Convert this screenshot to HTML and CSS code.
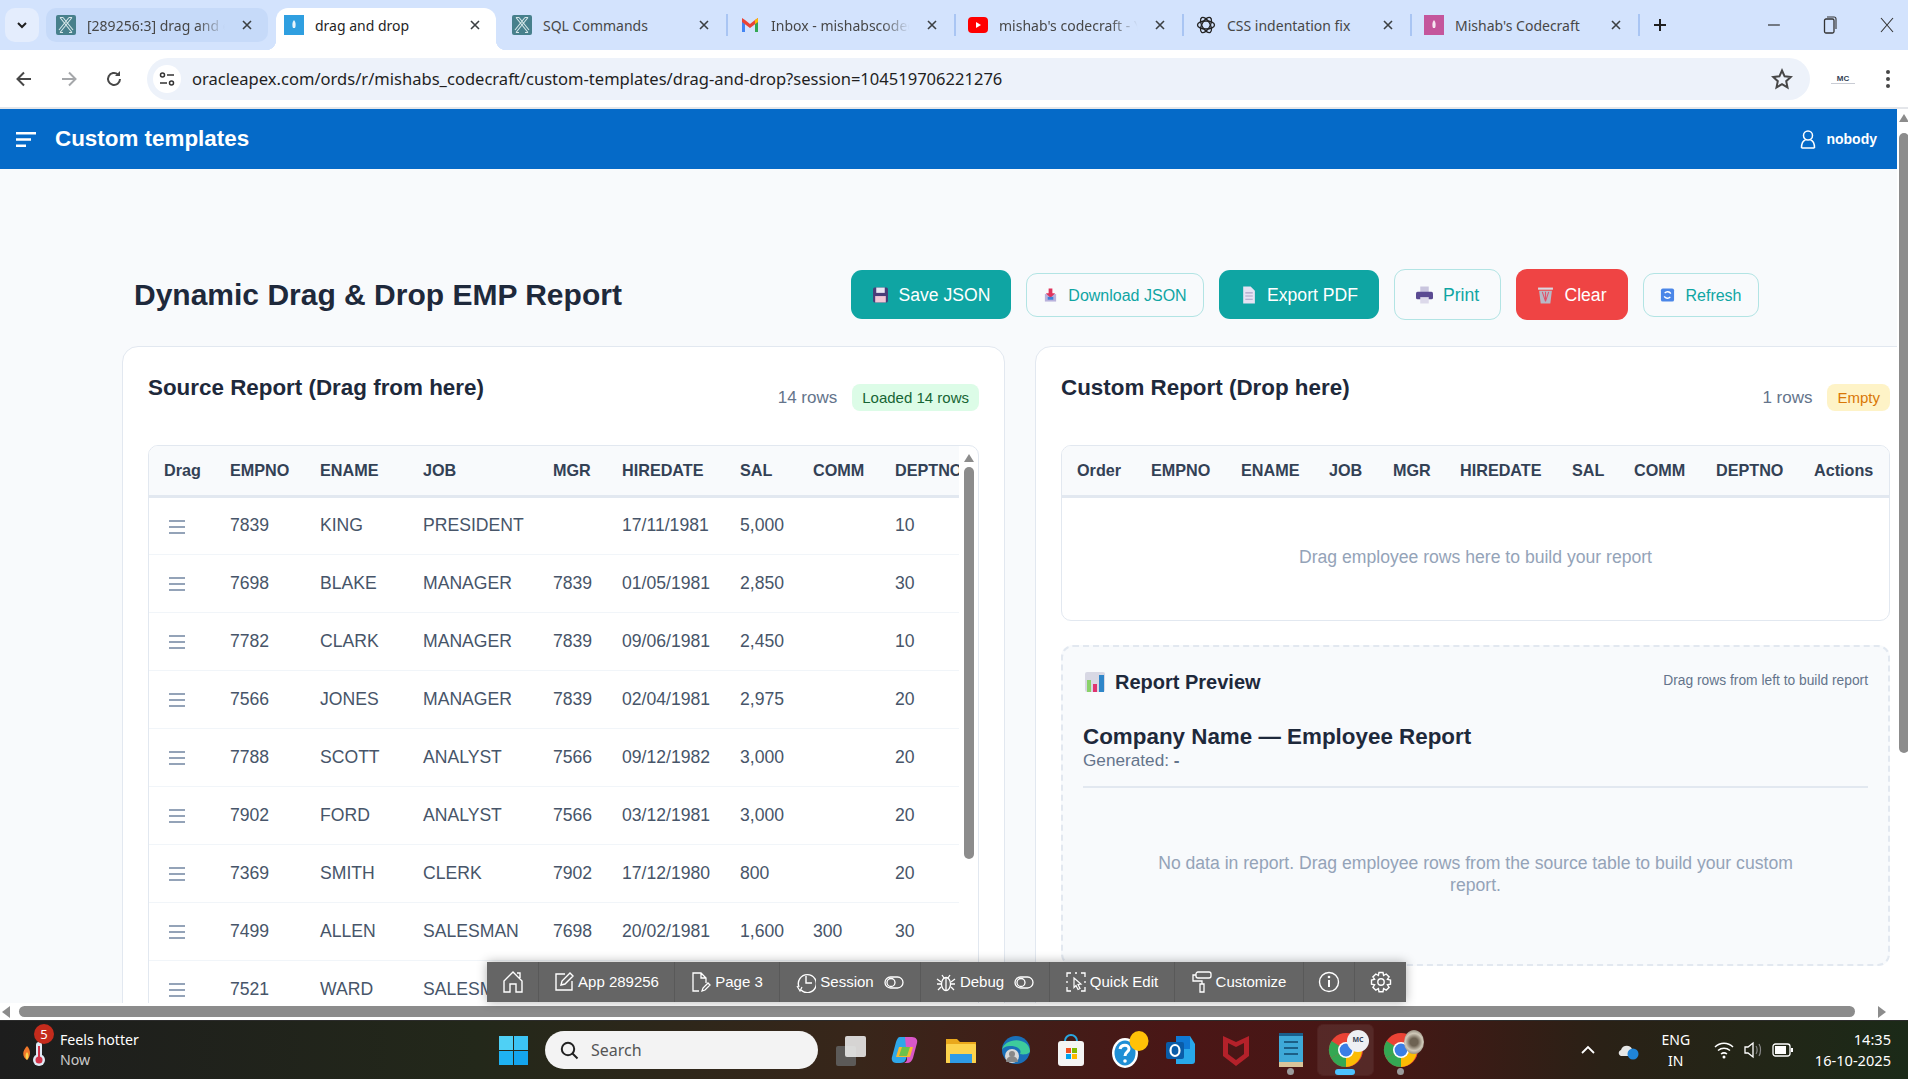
FILE: index.html
```html
<!DOCTYPE html>
<html lang="en">
<head>
    <meta charset="UTF-8">
    <title>drag and drop</title>
    <link rel="stylesheet" href="styles.css">
</head>
<body>
    <svg class="defs" width="0" height="0">
        <symbol id="apex-x" viewBox="0 0 20 20">
            <rect width="20" height="20" rx="2" fill="#47808c"/>
            <g fill="none" stroke="#d5e6e8" stroke-width="1.100"><path d="M4 2.500L16 17.500M7 2.500L17 15M16 2.500L4 17.500M13 2.500L3 15"/><path d="M4 2.500h3M13 2.500h3M4 17.500h3M13 17.500h3"/></g>
        </symbol>
        <symbol id="close-x" viewBox="0 0 12 12">
            <path d="M2 2l8 8M10 2l-8 8" stroke="#3c4043" stroke-width="1.600" fill="none"/>
        </symbol>
        <symbol id="toggle" viewBox="0 0 20 13">
            <rect x="1" y="1" width="18" height="11" rx="5.500" fill="none" stroke="#fff" stroke-width="1.300"/>
            <circle cx="7" cy="6.500" r="4" fill="none" stroke="#fff" stroke-width="1.300"/>
        </symbol>
        <symbol id="chrome" viewBox="0 0 36 36">
            <circle cx="18" cy="18" r="17" fill="#ea4335"/>
            <path d="M18 18L3 26a17 17 0 0 1 .5-17z" fill="#34a853"/>
            <path d="M18 18L3 26a17 17 0 0 0 15 9z" fill="#34a853"/>
            <path d="M18 18h16a17 17 0 0 1-16 17z" fill="#fbbc04"/>
            <circle cx="18" cy="18" r="8" fill="#fff"/>
            <circle cx="18" cy="18" r="6.400" fill="#3b7ee6"/>
        </symbol>
    </svg>

    <div class="tabstrip">
        <div class="tab-search">
            <svg width="12" height="12" viewBox="0 0 12 12"><path d="M2 4l4 4 4-4" fill="none" stroke="#1f1f1f" stroke-width="2"/></svg>
        </div>
        <div class="tab tab-hover">
            <svg class="favicon"><use href="#apex-x"/></svg>
            <span class="tab-title tab-fade">[289256:3] drag and drop</span>
            <svg class="tab-close"><use href="#close-x"/></svg>
        </div>
        <div class="tab tab-active">
            <svg class="favicon" viewBox="0 0 20 20"><rect width="20" height="20" fill="#2f9fe0"/><path d="M10 5c2 2 2 6 1 8H9c-1-2-1-6 1-8z" fill="#e8f4fb"/></svg>
            <span class="tab-title">drag and drop</span>
            <svg class="tab-close"><use href="#close-x"/></svg>
        </div>
        <div class="tab">
            <svg class="favicon"><use href="#apex-x"/></svg>
            <span class="tab-title">SQL Commands</span>
            <svg class="tab-close"><use href="#close-x"/></svg>
            <i class="tab-sep"></i>
        </div>
        <div class="tab">
            <svg class="favicon" viewBox="0 0 20 20"><path d="M2 5v12h3V9z" fill="#4285f4"/><path d="M15 9v8h3V5z" fill="#34a853"/><path d="M2 3v4l8 6 8-6V3l-3 2-5 4-5-4z" fill="#ea4335"/><path d="M15 5l3-2v4l-3 2z" fill="#fbbc04"/></svg>
            <span class="tab-title tab-fade">Inbox - mishabscodecraft</span>
            <svg class="tab-close"><use href="#close-x"/></svg>
            <i class="tab-sep"></i>
        </div>
        <div class="tab">
            <svg class="favicon" viewBox="0 0 20 20"><rect y="2" width="20" height="16" rx="4" fill="#f00"/><path d="M8 7l5 3-5 3z" fill="#fff"/></svg>
            <span class="tab-title tab-fade">mishab's codecraft - YouTube</span>
            <svg class="tab-close"><use href="#close-x"/></svg>
            <i class="tab-sep"></i>
        </div>
        <div class="tab">
            <svg class="favicon" viewBox="0 0 20 20"><g fill="none" stroke="#222" stroke-width="1.300"><ellipse cx="10" cy="10" rx="8.500" ry="4"/><ellipse cx="10" cy="10" rx="8.500" ry="4" transform="rotate(60 10 10)"/><ellipse cx="10" cy="10" rx="8.500" ry="4" transform="rotate(120 10 10)"/></g></svg>
            <span class="tab-title">CSS indentation fix</span>
            <svg class="tab-close"><use href="#close-x"/></svg>
            <i class="tab-sep"></i>
        </div>
        <div class="tab">
            <svg class="favicon" viewBox="0 0 20 20"><rect width="20" height="20" fill="#c4569c"/><path d="M10 5c2 2 2 6 1 8H9c-1-2-1-6 1-8z" fill="#f6e6f1"/></svg>
            <span class="tab-title">Mishab's Codecraft</span>
            <svg class="tab-close"><use href="#close-x"/></svg>
            <i class="tab-sep"></i>
        </div>
        <svg class="new-tab" width="16" height="16" viewBox="0 0 16 16"><path d="M8 2v12M2 8h12" stroke="#1f1f1f" stroke-width="2"/></svg>
        <div class="win-controls">
            <svg width="14" height="14" viewBox="0 0 14 14"><path d="M1 7h12" stroke="#333" stroke-width="1.200"/></svg>
            <svg width="14" height="22" viewBox="0 0 14 22"><rect x="1.500" y="5" width="9.500" height="14" rx="1.500" fill="none" stroke="#333" stroke-width="1.300"/><path d="M4 3h7a2 2 0 0 1 2 2v10" fill="none" stroke="#333" stroke-width="1.100"/></svg>
            <svg width="16" height="16" viewBox="0 0 16 16"><path d="M2 1l12 14M14 1L2 15" stroke="#333" stroke-width="1.100"/></svg>
        </div>
    </div>

    <div class="toolbar">
        <svg class="nav-ico" viewBox="0 0 20 20"><path d="M17 10H4M10 3.500L3.500 10l6.500 6.500" fill="none" stroke="#474747" stroke-width="2"/></svg>
        <svg class="nav-ico" viewBox="0 0 20 20"><path d="M3 10h13M10 3.500l6.500 6.500-6.500 6.500" fill="none" stroke="#a5a7aa" stroke-width="2"/></svg>
        <svg class="nav-ico" viewBox="0 0 20 20"><path d="M16 10a6 6 0 1 1-2-4.500" fill="none" stroke="#474747" stroke-width="2"/><path d="M16 2v5h-5z" fill="#474747"/></svg>
        <div class="omnibox">
            <div class="site-icon">
                <svg width="16" height="16" viewBox="0 0 16 16"><g fill="none" stroke="#333" stroke-width="1.500"><circle cx="3.500" cy="4" r="2"/><path d="M8 4h7M1 12h7"/><circle cx="12.500" cy="12" r="2"/></g></svg>
            </div>
            <span class="url">oracleapex.com/ords/r/mishabs_codecraft/custom-templates/drag-and-drop?session=104519706221276</span>
            <svg class="star" width="22" height="22" viewBox="0 0 22 22"><path d="M11 2.500l2.600 5.800 6.200.7-4.600 4.200 1.300 6.200L11 16.200l-5.500 3.200 1.300-6.200L2.200 9l6.200-.7z" fill="none" stroke="#474747" stroke-width="2"/></svg>
        </div>
        <div class="profile">MC</div>
        <svg class="menu-dots" width="6" height="20" viewBox="0 0 6 20"><circle cx="3" cy="3" r="2" fill="#474747"/><circle cx="3" cy="10" r="2" fill="#474747"/><circle cx="3" cy="17" r="2" fill="#474747"/></svg>
    </div>

    <div class="app">
        <div class="app-main">
            <div class="page">
                <header class="app-header">
                    <div class="brand">
                        <svg width="20" height="15" viewBox="0 0 20 15"><path d="M0 1.300h20M0 7.500h15M0 13.700h10" stroke="#fff" stroke-width="2.500"/></svg>
                        <span class="app-name">Custom templates</span>
                    </div>
                    <div class="user">
                        <svg width="16" height="20" viewBox="0 0 16 20"><g fill="none" stroke="#fff" stroke-width="1.500"><circle cx="8" cy="6.500" r="4.500"/><path d="M1.500 19c0-5 2-7.500 4-8M14.500 19c0-5-2-7.500-4-8M1.500 19h13"/></g></svg>
                        <span>nobody</span>
                    </div>
                </header>

                <main class="content">
                    <div class="page-head">
                        <h1 class="page-title">Dynamic Drag &amp; Drop EMP Report</h1>
                        <div class="actions">
                            <button class="btn btn-solid">
                                <svg class="btn-ico" viewBox="0 0 16 16"><rect x="1" y="1" width="14" height="14" rx="1.500" fill="#4a3c78"/><rect x="4" y="1" width="8" height="5" fill="#e9e6f2"/><rect x="3" y="9" width="10" height="6" fill="#f2c6d6"/></svg>
                                <span class="btn-text">Save JSON</span>
                            </button>
                            <button class="btn btn-outline btn-download">
                                <svg class="btn-ico small" viewBox="0 0 16 16"><path d="M2 7h12v8H2z" fill="#b9b2dc"/><path d="M6 1h4v5h3l-5 5-5-5h3z" fill="#e0335c"/><rect x="5" y="10" width="6" height="3" fill="#3f7fd9"/></svg>
                                <span class="btn-text">Download JSON</span>
                            </button>
                            <button class="btn btn-solid">
                                <svg class="btn-ico" viewBox="0 0 16 16"><path d="M3 0h7l4 4v12H3z" fill="#e6e2f3"/><path d="M5 6h7M5 9h7M5 12h7" stroke="#a9a3c6"/></svg>
                                <span class="btn-text">Export PDF</span>
                            </button>
                            <button class="btn btn-outline btn-print">
                                <svg class="btn-ico" viewBox="0 0 16 16"><rect x="4" y="0" width="8" height="6" fill="#c9c5de"/><rect x="0" y="5" width="16" height="7" rx="1.500" fill="#5a4a92"/><rect x="4" y="10" width="8" height="6" fill="#dcd9ea"/></svg>
                                <span class="btn-text">Print</span>
                            </button>
                            <button class="btn btn-danger">
                                <svg class="btn-ico" viewBox="0 0 16 16"><rect x="1" y="1" width="14" height="2" fill="#d9d9e2"/><path d="M2 4h12l-1.500 12h-9z" fill="#b8b8c6"/><path d="M5 5l3 9M11 5l-3 9M8 5v9" stroke="#e0526a"/></svg>
                                <span class="btn-text">Clear</span>
                            </button>
                            <button class="btn btn-outline btn-refresh">
                                <svg class="btn-ico small" viewBox="0 0 16 16"><rect x="1" y="1" width="14" height="14" rx="2" fill="#4a86e8"/><path d="M11.500 6.500A4 4 0 0 0 5 6M4.500 9.500A4 4 0 0 0 11 10" fill="none" stroke="#fff" stroke-width="1.500"/></svg>
                                <span class="btn-text">Refresh</span>
                            </button>
                        </div>
                    </div>

                    <div class="cards">
                        <section class="card source-card">
                            <div class="card-head">
                                <h2 class="card-title">Source Report (Drag from here)</h2>
                                <div class="card-meta">
                                    <span class="row-count">14 rows</span>
                                    <span class="pill pill-ok">Loaded 14 rows</span>
                                </div>
                            </div>
                            <div class="table-box source-box">
                                <div class="table-clip">
                                    <table class="emp-table source-table">
                                        <thead>
                                            <tr>
                                                <th class="c-drag">Drag</th><th class="c-empno">EMPNO</th><th class="c-ename">ENAME</th><th class="c-job">JOB</th><th class="c-mgr">MGR</th><th class="c-hire">HIREDATE</th><th class="c-sal">SAL</th><th class="c-comm">COMM</th><th class="c-dept">DEPTNO</th>
                                            </tr>
                                        </thead>
                                        <tbody>
                                            <tr><td><i class="handle"></i></td><td>7839</td><td>KING</td><td>PRESIDENT</td><td></td><td>17/11/1981</td><td>5,000</td><td></td><td>10</td></tr>
                                            <tr><td><i class="handle"></i></td><td>7698</td><td>BLAKE</td><td>MANAGER</td><td>7839</td><td>01/05/1981</td><td>2,850</td><td></td><td>30</td></tr>
                                            <tr><td><i class="handle"></i></td><td>7782</td><td>CLARK</td><td>MANAGER</td><td>7839</td><td>09/06/1981</td><td>2,450</td><td></td><td>10</td></tr>
                                            <tr><td><i class="handle"></i></td><td>7566</td><td>JONES</td><td>MANAGER</td><td>7839</td><td>02/04/1981</td><td>2,975</td><td></td><td>20</td></tr>
                                            <tr><td><i class="handle"></i></td><td>7788</td><td>SCOTT</td><td>ANALYST</td><td>7566</td><td>09/12/1982</td><td>3,000</td><td></td><td>20</td></tr>
                                            <tr><td><i class="handle"></i></td><td>7902</td><td>FORD</td><td>ANALYST</td><td>7566</td><td>03/12/1981</td><td>3,000</td><td></td><td>20</td></tr>
                                            <tr><td><i class="handle"></i></td><td>7369</td><td>SMITH</td><td>CLERK</td><td>7902</td><td>17/12/1980</td><td>800</td><td></td><td>20</td></tr>
                                            <tr><td><i class="handle"></i></td><td>7499</td><td>ALLEN</td><td>SALESMAN</td><td>7698</td><td>20/02/1981</td><td>1,600</td><td>300</td><td>30</td></tr>
                                            <tr><td><i class="handle"></i></td><td>7521</td><td>WARD</td><td>SALESMAN</td><td>7698</td><td>22/02/1981</td><td>1,250</td><td>500</td><td>30</td></tr>
                                        </tbody>
                                    </table>
                                </div>
                                <div class="mini-scroll">
                                    <i class="arrow-up"></i>
                                    <i class="mini-thumb"></i>
                                </div>
                            </div>
                        </section>

                        <section class="card custom-card">
                            <div class="card-head">
                                <h2 class="card-title">Custom Report (Drop here)</h2>
                                <div class="card-meta">
                                    <span class="row-count">1 rows</span>
                                    <span class="pill pill-warn">Empty</span>
                                </div>
                            </div>
                            <div class="table-box custom-box">
                                <table class="emp-table custom-table">
                                    <thead>
                                        <tr>
                                            <th class="o-order">Order</th><th class="o-empno">EMPNO</th><th class="o-ename">ENAME</th><th class="o-job">JOB</th><th class="o-mgr">MGR</th><th class="o-hire">HIREDATE</th><th class="o-sal">SAL</th><th class="o-comm">COMM</th><th class="o-dept">DEPTNO</th><th>Actions</th>
                                        </tr>
                                    </thead>
                                    <tbody>
                                        <tr><td class="drop-msg" colspan="10">Drag employee rows here to build your report</td></tr>
                                    </tbody>
                                </table>
                            </div>
                            <div class="preview">
                                <div class="preview-head">
                                    <div class="preview-title">
                                        <svg width="20" height="20" viewBox="0 0 20 20"><rect width="20" height="20" rx="2" fill="#d8d8e4"/><rect x="2" y="8" width="4" height="12" fill="#8bd26a"/><rect x="8" y="12" width="4" height="8" fill="#e0336f"/><rect x="14" y="3" width="5" height="17" fill="#2f86c9"/></svg>
                                        <span>Report Preview</span>
                                    </div>
                                    <span class="preview-hint">Drag rows from left to build report</span>
                                </div>
                                <div class="doc-head">
                                    <div class="doc-name">Company Name — Employee Report</div>
                                    <div class="doc-date">Generated: <b>-</b></div>
                                </div>
                                <p class="no-data">No data in report. Drag employee rows from the source table to build your custom report.</p>
                            </div>
                        </section>
                    </div>
                </main>
            </div>
            <div class="vscroll">
                <i class="arrow-up"></i>
                <i class="vthumb"></i>
            </div>
        </div>
        <div class="hscroll">
            <i class="arrow-left"></i>
            <i class="hthumb"></i>
            <i class="arrow-right"></i>
        </div>

        <div class="devbar">
            <div class="dev-item dev-home">
                <svg width="22" height="24" viewBox="0 0 22 24"><path d="M2 22V11L11 2l9 9v11h-6v-8H8v8zM15 3h3v5" fill="none" stroke="#fff" stroke-width="1.400"/></svg>
            </div>
            <div class="dev-item dev-app">
                <svg width="20" height="20" viewBox="0 0 20 20"><path d="M11 2H2v16h16V9M7 13l1-4 8-8 3 3-8 8z" fill="none" stroke="#fff" stroke-width="1.400"/></svg>
                <span>App 289256</span>
            </div>
            <div class="dev-item dev-page">
                <svg width="20" height="22" viewBox="0 0 20 22"><path d="M8 20H2V2h8l5 5v5M10 2v5h5M11 20l1-3 5-5 2 2-5 5z" fill="none" stroke="#fff" stroke-width="1.300"/></svg>
                <span>Page 3</span>
            </div>
            <div class="dev-item dev-session">
                <svg width="20" height="22" viewBox="0 0 20 22"><path d="M10 5v7h6M5 19a9 9 0 1 0-2-3" fill="none" stroke="#fff" stroke-width="1.400"/><path d="M1 15l3 5 2-4" fill="none" stroke="#fff" stroke-width="1.200"/></svg>
                <span>Session</span>
                <svg class="toggle"><use href="#toggle"/></svg>
            </div>
            <div class="dev-item dev-debug">
                <svg width="20" height="20" viewBox="0 0 20 20"><g fill="none" stroke="#fff" stroke-width="1.300"><ellipse cx="10" cy="12" rx="4.500" ry="6.500"/><path d="M10 6v12M6 3l2 3M14 3l-2 3M1 7l4 3M19 7l-4 3M1 12h4M15 12h4M2 18l3-3M18 18l-3-3"/></g></svg>
                <span>Debug</span>
                <svg class="toggle"><use href="#toggle"/></svg>
            </div>
            <div class="dev-item dev-quick">
                <svg width="20" height="22" viewBox="0 0 20 22"><path d="M5 2H1v4M15 2h4v4M1 16v4h4M19 16v4h-4M9 2h2M1 10v2M19 10v2" fill="none" stroke="#fff" stroke-width="1.300"/><path d="M8 7l7 6-3 .5 2 4-2 1-2-4-2 2z" fill="none" stroke="#fff" stroke-width="1.200"/></svg>
                <span>Quick Edit</span>
            </div>
            <div class="dev-item dev-custom">
                <svg width="20" height="22" viewBox="0 0 20 22"><rect x="4" y="1" width="15" height="6" rx="2" fill="none" stroke="#fff" stroke-width="1.300"/><path d="M4 4H1v6h9v3M8 13h4v8H8z" fill="none" stroke="#fff" stroke-width="1.300"/></svg>
                <span>Customize</span>
            </div>
            <div class="dev-item dev-info">
                <svg width="22" height="22" viewBox="0 0 22 22"><circle cx="11" cy="11" r="9.500" fill="none" stroke="#fff" stroke-width="1.400"/><path d="M11 9v7" stroke="#fff" stroke-width="2"/><circle cx="11" cy="6" r="1.300" fill="#fff"/></svg>
            </div>
            <div class="dev-item dev-gear">
                <svg width="22" height="22" viewBox="0 0 22 22"><g fill="none" stroke="#fff" stroke-width="1.400"><circle cx="11" cy="11" r="3.200"/><path d="M9 1.500h4l.6 3 2.600-1.500 2.900 2.900-1.700 2.500 3.100.7v4l-3.100.7 1.700 2.500-2.900 2.900-2.600-1.500-.6 3H9l-.6-3-2.600 1.500-2.900-2.900 1.700-2.500-3.100-.7v-4l3.100-.7-1.700-2.500 2.900-2.900 2.600 1.500z"/></g></svg>
            </div>
        </div>
    </div>

    <footer class="taskbar">
        <div class="weather">
            <div class="weather-ico">
                <svg width="30" height="36" viewBox="0 0 30 36"><path d="M5 14c4 4 4 10 0 14-5-3-5-9 0-14z" fill="#f0772a"/><path d="M5 20c2 2 2 6 0 8-2-2-2-6 0-8z" fill="#fbd24c"/><rect x="14" y="10" width="6" height="18" rx="3" fill="#dfeaf5"/><circle cx="17" cy="28" r="6" fill="#dfeaf5"/><circle cx="17" cy="28" r="3.500" fill="#d3344a"/><rect x="16" y="14" width="2" height="14" fill="#d3344a"/></svg>
                <span class="weather-badge">5</span>
            </div>
            <div class="weather-text">
                <span>Feels hotter</span>
                <span class="weather-now">Now</span>
            </div>
        </div>
        <div class="task-center">
            <svg class="win-logo" width="29" height="29" viewBox="0 0 29 29"><rect width="14" height="14" fill="#4fd0f5"/><rect x="15" width="14" height="14" fill="#3cc4f5"/><rect y="15" width="14" height="14" fill="#1fb2f2"/><rect x="15" y="15" width="14" height="14" fill="#14a5ee"/></svg>
            <div class="task-search">
                <svg width="19" height="19" viewBox="0 0 19 19"><circle cx="8" cy="8" r="6.200" fill="none" stroke="#222" stroke-width="2"/><path d="M12.500 12.500l5 5" stroke="#222" stroke-width="2"/></svg>
                <span>Search</span>
            </div>
            <div class="task-icons">
                <div class="task-icon">
                    <svg width="30" height="32" viewBox="0 0 30 32"><rect y="12" width="20" height="20" rx="2" fill="#5c5a58"/><rect x="9" y="2" width="21" height="21" rx="2" fill="#e8e8e8" opacity=".9"/></svg>
                </div>
                <div class="task-icon">
                    <svg width="30" height="30" viewBox="0 0 30 30"><path d="M9 2h7c3 0 5 2 4 6l-5 16c-1 3-3 4-6 4H5c-3 0-5-3-4-6l4-15c1-3 2-5 4-5z" fill="#2fa6e8"/><path d="M14 2h7c4 0 6 3 5 6l-4 15c-1 3-3 5-6 5h-3c2-1 3-2 3-4z" fill="#d957c8"/><path d="M8 12h14l-3 10H5z" fill="#f7b733"/><path d="M11 12h8l-3 9H8z" fill="#6cc24a"/></svg>
                </div>
                <div class="task-icon">
                    <svg width="30" height="26" viewBox="0 0 30 26"><path d="M0 2h11l3 3h16v21H0z" fill="#e9a81c"/><rect y="7" width="30" height="19" rx="1" fill="#fcd34d"/><rect x="4" y="17" width="22" height="9" fill="#2e9be6"/></svg>
                </div>
                <div class="task-icon">
                    <svg width="30" height="30" viewBox="0 0 30 30"><circle cx="15" cy="15" r="14" fill="#1a6fb8"/><path d="M1 15C3 3 27 1 29 16c0 3-6 4-10 3 4-8-15-11-18-4z" fill="#3ecb9c"/><circle cx="11" cy="21" r="7" fill="#d9d9d9"/><circle cx="11" cy="19" r="3" fill="#888"/><path d="M5 27a6 6 0 0 1 12 0z" fill="#888"/></svg>
                </div>
                <div class="task-icon">
                    <svg width="28" height="32" viewBox="0 0 28 32"><path d="M8 7a6 6 0 0 1 12 0" fill="none" stroke="#29a7e1" stroke-width="2"/><rect x="1" y="7" width="26" height="25" rx="3" fill="#f4f4f4"/><rect x="9" y="14" width="5" height="5" fill="#f25022"/><rect x="15" y="14" width="5" height="5" fill="#7fba00"/><rect x="9" y="20" width="5" height="5" fill="#00a4ef"/><rect x="15" y="20" width="5" height="5" fill="#ffb900"/></svg>
                </div>
                <div class="task-icon task-help">
                    <svg width="38" height="38" viewBox="0 0 38 38"><ellipse cx="14" cy="22" rx="13" ry="15" fill="#fff"/><ellipse cx="14" cy="22" rx="10.500" ry="12.500" fill="#1f8fd6"/><path d="M9 18c1-5 9-5 9 0 0 3-4 3-4 7" fill="none" stroke="#fff" stroke-width="3"/><circle cx="14" cy="30" r="1.800" fill="#fff"/><ellipse cx="28" cy="10" rx="9.500" ry="10" fill="#ffc107"/></svg>
                </div>
                <div class="task-icon">
                    <svg width="30" height="30" viewBox="0 0 30 30"><path d="M13 1h11l5 8v17a3 3 0 0 1-3 3H10v-9z" fill="#28a8ea"/><path d="M10 1h14v13H10z" fill="#0f78d4"/><rect y="7" width="18" height="17" rx="2" fill="#0a5ca8"/><ellipse cx="9" cy="15.500" rx="4.500" ry="5.500" fill="none" stroke="#fff" stroke-width="2.200"/></svg>
                </div>
                <div class="task-icon">
                    <svg width="28" height="34" viewBox="0 0 28 34"><path d="M1 3l13 6 13-6v20L14 33 1 23zM6 10v11l8 6 8-6V10l-8 4z" fill="#b4212a"/></svg>
                </div>
                <div class="task-icon">
                    <svg width="24" height="36" viewBox="0 0 24 36"><rect y="1" width="24" height="30" fill="#3ea9d8"/><rect y="1" width="24" height="3" fill="#195f8c"/><path d="M5 10h14M5 16h14M5 22h14" stroke="#1c5f86" stroke-width="2"/><rect y="30" width="24" height="5" fill="#d8c49a"/></svg>
                    <i class="run-dot"></i>
                </div>
                <div class="task-icon task-active">
                    <svg width="36" height="36"><use href="#chrome"/></svg>
                    <span class="corner-badge">MC</span>
                    <i class="run-pill"></i>
                </div>
                <div class="task-icon">
                    <svg width="36" height="36"><use href="#chrome"/></svg>
                    <span class="corner-photo"></span>
                    <i class="run-dot"></i>
                </div>
            </div>
        </div>
        <div class="tray">
            <svg width="16" height="10" viewBox="0 0 16 10"><path d="M2 8l6-6 6 6" fill="none" stroke="#fff" stroke-width="1.800"/></svg>
            <svg width="22" height="20" viewBox="0 0 22 20"><path d="M3 16c-3-1-3-5 0-6 1-5 9-6 11-1 3 0 5 2 5 5l-2 2z" fill="#e6e6e6"/><circle cx="15" cy="14" r="5.500" fill="#1f84d8"/></svg>
            <div class="lang"><span>ENG</span><span>IN</span></div>
            <div class="tray-status">
                <svg width="20" height="18" viewBox="0 0 20 18"><g fill="none" stroke="#fff" stroke-width="1.500"><path d="M1 6c5-5 13-5 18 0M4 9.500c3.500-3 8.500-3 12 0M7 13c2-1.500 4-1.500 6 0"/></g><circle cx="10" cy="16" r="1.500" fill="#fff"/></svg>
                <svg width="18" height="18" viewBox="0 0 18 18"><path d="M1 6h3l5-4v14l-5-4H1z" fill="none" stroke="#fff" stroke-width="1.300"/><path d="M12 5c1.500 2 1.500 6 0 8M15 3c2 3 2 9 0 12" fill="none" stroke="#888" stroke-width="1.200"/></svg>
                <svg width="22" height="14" viewBox="0 0 22 14"><rect x="1" y="1" width="17" height="12" rx="2.500" fill="none" stroke="#fff" stroke-width="1.300"/><rect x="3" y="3" width="11" height="8" fill="#fff"/><rect x="19" y="5" width="2" height="4" fill="#fff"/></svg>
            </div>
            <div class="clock"><span>14:35</span><span>16-10-2025</span></div>
        </div>
    </footer>
</body>
</html>
```

FILE: styles.css
```css
*{
    box-sizing: border-box;
}
html,body{
    margin: 0;
    padding: 0;
    height: 100%;
    overflow: hidden;
}
body{
    display: flex;
    flex-direction: column;
    width: 1908px;
    height: 1079px;
    font-family: "Liberation Sans", Arial, sans-serif;
    color: #1e293b;
}
.defs{
    position: absolute;
}
i{
    display: block;
}

/* browser tabs */
.tabstrip{
    display: flex;
    align-items: flex-start;
    height: 50px;
    background-color: #d3e3fd;
    flex-shrink: 0;
}
.tab-search{
    display: flex;
    align-items: center;
    justify-content: center;
    width: 34px;
    height: 34px;
    margin: 8px 7px 0 5px;
    border-radius: 10px;
    background-color: #e4edfd;
}
.tab{
    display: flex;
    align-items: center;
    width: 228px;
    height: 42px;
    margin-top: 8px;
    padding: 0 0 8px 10px;
    font-family: "Noto Sans", sans-serif;
    font-size: 14px;
    color: #474747;
}
.tab-hover{
    width: 222px;
    margin-right: 6px;
    height: 34px;
    padding-bottom: 0;
    border-radius: 10px;
    background-color: #c6daf9;
}
.tab-active{
    position: relative;
    margin-left: 2px;
    width: 220px;
    margin-right: 6px;
    border-radius: 12px 12px 0 0;
    padding-left: 8px;
    background-color: #fff;
    color: #1f1f1f;
}
.tab-active::before,.tab-active::after{
    content: "";
    position: absolute;
    bottom: 0;
    width: 10px;
    height: 10px;
}
.tab-active::before{
    left: -10px;
    background: radial-gradient(circle at 0 0, transparent 10px, #fff 10.500px);
}
.tab-active::after{
    right: -10px;
    background: radial-gradient(circle at 100% 0, transparent 10px, #fff 10.500px);
}
.favicon{
    width: 20px;
    height: 20px;
    flex-shrink: 0;
}
.tab-title{
    flex: 1;
    min-width: 0;
    margin-left: 11px;
    overflow: hidden;
    white-space: nowrap;
}
.tab-fade{
    -webkit-mask-image: linear-gradient(to right, #000 76%, transparent 95%);
    mask-image: linear-gradient(to right, #000 76%, transparent 95%);
}
.tab-close{
    width: 12px;
    height: 12px;
    margin: 0 15px 0 9px;
    flex-shrink: 0;
}
.tab-sep{
    width: 2px;
    height: 22px;
    margin-right: 2px;
    background-color: #a9c5f3;
    flex-shrink: 0;
}
.tab:not(.tab-hover):not(.tab-active) .tab-close{
    margin-right: 16px;
}
.new-tab{
    margin: 17px 0 0 10px;
}
.win-controls{
    display: flex;
    align-items: center;
    gap: 42px;
    margin: 14px 0 0 auto;
    padding-right: 13px;
    height: 22px;
}

/* address bar */
.toolbar{
    display: flex;
    align-items: center;
    height: 59px;
    padding: 0 11px 0 14px;
    background-color: #fff;
    border-bottom: 2px solid #e4e6ea;
    flex-shrink: 0;
}
.nav-ico{
    width: 20px;
    height: 20px;
    margin-right: 25px;
    flex-shrink: 0;
}
.omnibox{
    display: flex;
    align-items: center;
    width: 1663px;
    height: 42px;
    margin-left: -2px;
    padding: 0 17px 0 6px;
    border-radius: 21px;
    background-color: #edf2fa;
}
.site-icon{
    display: flex;
    align-items: center;
    justify-content: center;
    width: 28px;
    height: 28px;
    border-radius: 50%;
    background-color: #fff;
}
.url{
    flex: 1;
    margin-left: 11px;
    font-family: "Noto Sans", sans-serif;
    font-size: 16.560px;
    color: #1f1f1f;
}
.profile{
    width: 24px;
    margin-left: 21px;
    font-size: 8px;
    font-weight: 700;
    text-align: center;
    color: #334155;
    border-bottom: 1px solid #c9ccd4;
}
.menu-dots{
    margin-left: 30px;
}

/* app area */
.app{
    position: relative;
    display: flex;
    flex-direction: column;
    flex: 1;
    min-height: 0;
    background-color: #fff;
}
.app-main{
    display: flex;
    flex: 1;
    min-height: 0;
}
.page{
    display: flex;
    flex-direction: column;
    width: 1897px;
    overflow: hidden;
    background-color: #f8fafc;
}
.app-header{
    display: flex;
    align-items: center;
    justify-content: space-between;
    height: 60px;
    padding: 0 20px 0 16px;
    background-color: #056ac8;
    color: #fff;
    flex-shrink: 0;
}
.brand{
    display: flex;
    align-items: center;
    gap: 19px;
}
.app-name{
    font-size: 22.400px;
    font-weight: 700;
}
.user{
    display: flex;
    align-items: center;
    gap: 10px;
    font-size: 14px;
    font-weight: 700;
}
.content{
    flex: 1;
    min-height: 0;
    width: 1960px;
    padding: 100px 0 0 122px;
}
.page-head{
    display: flex;
    align-items: center;
    justify-content: space-between;
    width: 1637px;
    height: 51px;
    padding-left: 12px;
}
.page-title{
    margin: 0;
    font-size: 30px;
    font-weight: 700;
    color: #1e293b;
}
.actions{
    display: flex;
    align-items: center;
    gap: 15px;
}
.btn{
    display: flex;
    align-items: center;
    justify-content: center;
    gap: 9px;
    padding: 0;
    border-radius: 11px;
    font-family: "Liberation Sans", Arial, sans-serif;
    cursor: pointer;
}
.btn-text{
    padding: 2px 0 0 1px;
}
.btn-ico{
    width: 17px;
    height: 20px;
}
.btn-ico.small{
    width: 15px;
    height: 18px;
}
.btn-solid{
    width: 160px;
    height: 49px;
    border: none;
    background-color: #0fa5a3;
    color: #fff;
    font-size: 17.600px;
}
.btn-outline{
    height: 44px;
    border: 1px solid #b2e4e4;
    background-color: #f8fafc;
    color: #0fa5a3;
    font-size: 16px;
}
.btn-download{
    width: 178px;
}
.btn-refresh{
    width: 116px;
}
.btn-print{
    width: 107px;
    height: 51px;
    font-size: 17.600px;
}
.btn-danger{
    width: 112px;
    height: 51px;
    border: none;
    background-color: #ef4444;
    color: #fff;
    font-size: 17.600px;
}
.cards{
    display: flex;
    gap: 30px;
    margin-top: 26px;
}
.card{
    flex-shrink: 0;
    height: 900px;
    padding: 25px;
    border: 1px solid #e2e8f0;
    border-radius: 16px;
    background-color: #fff;
}
.source-card{
    width: 883px;
}
.custom-card{
    width: 881px;
}
.card-head{
    display: flex;
    align-items: flex-start;
    justify-content: space-between;
    height: 73px;
}
.card-title{
    margin: 0;
    font-size: 22.400px;
    line-height: 32px;
    font-weight: 700;
    color: #1e293b;
}
.card-meta{
    display: flex;
    align-items: center;
    gap: 15px;
    margin-top: 12px;
}
.row-count{
    font-size: 17px;
    color: #64748b;
}
.pill{
    height: 27px;
    padding: 0 10px;
    border-radius: 8px;
    font-size: 15px;
    line-height: 27px;
}
.pill-ok{
    background-color: #dcfce7;
    color: #166534;
}
.pill-warn{
    background-color: #fef3c7;
    color: #d97706;
}

/* tables */
.table-box{
    border: 1px solid #e2e8f0;
    border-radius: 10px;
    overflow: hidden;
    background-color: #fff;
}
.source-box{
    display: flex;
    height: 700px;
}
.table-clip{
    width: 810px;
    overflow: hidden;
}
.emp-table{
    border-collapse: collapse;
    table-layout: fixed;
}
.emp-table th{
    height: 50px;
    padding: 0 0 0 15px;
    background-color: #f8fafc;
    border-bottom: 3px solid #e2e8f0;
    font-size: 16.200px;
    font-weight: 700;
    text-align: left;
    color: #334155;
    white-space: nowrap;
}
.source-table{
    width: 860px;
}
.source-table td{
    height: 58px;
    padding: 0 0 0 15px;
    border-bottom: 1px solid #f1f5f9;
    font-size: 17.600px;
    color: #475569;
    white-space: nowrap;
}
.c-drag{ width: 66px; }
.c-empno{ width: 90px; }
.c-ename{ width: 103px; }
.c-job{ width: 130px; }
.c-mgr{ width: 69px; }
.c-hire{ width: 118px; }
.c-sal{ width: 73px; }
.c-comm{ width: 82px; }
.c-dept{ width: 129px; }
.handle{
    width: 16px;
    height: 14px;
    margin: 2px 0 0 5px;
    background: linear-gradient(#94a3b8 2px, transparent 2px) 0 0 / 100% 6px;
}
.mini-scroll{
    width: 19px;
    padding: 8px 0 0 5px;
}
.mini-thumb{
    width: 10px;
    height: 392px;
    margin-top: 5px;
    border-radius: 5px;
    background-color: #8c8c8c;
}
.arrow-up{
    width: 0;
    height: 0;
    border-left: 5px solid transparent;
    border-right: 5px solid transparent;
    border-bottom: 8px solid #8c8c8c;
}
.custom-box{
    height: 176px;
}
.custom-table{
    width: 100%;
}
.o-order{ width: 74px; }
.o-empno{ width: 90px; }
.o-ename{ width: 88px; }
.o-job{ width: 64px; }
.o-mgr{ width: 67px; }
.o-hire{ width: 112px; }
.o-sal{ width: 62px; }
.o-comm{ width: 82px; }
.o-dept{ width: 98px; }
.drop-msg{
    height: 124px;
    font-size: 17.600px;
    text-align: center;
    color: #94a3b8;
    padding-bottom: 4px;
}

/* report preview */
.preview{
    height: 321px;
    margin-top: 24px;
    padding: 20px;
    border: 2px dashed #e2e8f0;
    border-radius: 12px;
    background-color: #f8fafc;
}
.preview-head{
    display: flex;
    align-items: center;
    justify-content: space-between;
    height: 30px;
}
.preview-title{
    display: flex;
    align-items: center;
    gap: 10px;
    padding-left: 2px;
    font-size: 20px;
    font-weight: 700;
}
.preview-hint{
    margin-bottom: 3px;
    font-size: 13.800px;
    color: #64748b;
}
.doc-head{
    margin-top: 26px;
    padding-bottom: 17px;
    border-bottom: 2px solid #e2e8f0;
}
.doc-name{
    font-size: 22.400px;
    line-height: 28px;
    font-weight: 700;
}
.doc-date{
    font-size: 17.200px;
    line-height: 18px;
    color: #64748b;
}
.doc-date b{
    font-weight: 700;
}
.no-data{
    margin: 65px 60px 0;
    font-size: 17.600px;
    line-height: 21.600px;
    text-align: center;
    color: #94a3b8;
}

/* page scrollbars */
.vscroll{
    width: 11px;
    padding: 5px 0 0 2px;
    background-color: #fff;
    overflow: hidden;
}
.vthumb{
    width: 10px;
    height: 620px;
    margin-top: 11px;
    border-radius: 5px;
    background-color: #8c8c8c;
}
.hscroll{
    display: flex;
    align-items: center;
    height: 17px;
    padding: 0 17px 0 2px;
    background-color: #fff;
    flex-shrink: 0;
}
.hthumb{
    width: 1836px;
    height: 11px;
    margin: 0 23px 0 9px;
    border-radius: 6px;
    background-color: #8c8c8c;
}
.arrow-left{
    width: 0;
    height: 0;
    border-top: 6px solid transparent;
    border-bottom: 6px solid transparent;
    border-right: 8px solid #8c8c8c;
}
.arrow-right{
    width: 0;
    height: 0;
    border-top: 6px solid transparent;
    border-bottom: 6px solid transparent;
    border-left: 8px solid #8c8c8c;
}

/* apex developer toolbar, floats over the page */
.devbar{
    position: absolute;
    left: 487px;
    top: 853px;
    display: flex;
    width: 919px;
    height: 40px;
    background-color: #656565;
    box-shadow: 0 0 10px rgba(0,0,0,.3);
    color: #fff;
    font-size: 15px;
}
.dev-item{
    display: flex;
    align-items: center;
    justify-content: center;
    gap: 4px;
    border-right: 1px solid #595959;
}
.dev-item span{
    margin-bottom: 2px;
}
.dev-home{ width: 52px; }
.dev-app{ width: 136px; }
.dev-page{ width: 105px; }
.dev-session{ width: 141px; }
.dev-debug{ width: 129px; }
.dev-quick{ width: 125px; }
.dev-custom{ width: 129px; }
.dev-info{ width: 51px; }
.dev-gear{ width: 51px; border-right: none; }
.toggle{
    width: 20px;
    height: 13px;
    margin-left: 6px;
}

/* windows taskbar */
.taskbar{
    display: flex;
    align-items: center;
    height: 59px;
    background: linear-gradient(to right, #1d1d1d 0%, #23281a 25%, #38261a 45%, #4a1616 62%, #471715 72%, #2a2116 84%, #1b2a18 100%);
    border-top: 1px solid #2c2c2c;
    color: #fff;
    flex-shrink: 0;
    font-family: "Noto Sans", sans-serif;
}
.weather{
    display: flex;
    align-items: center;
    width: 499px;
    padding-left: 22px;
    gap: 8px;
}
.weather-ico{
    position: relative;
    width: 30px;
    height: 36px;
}
.weather-badge{
    position: absolute;
    left: 12px;
    top: -8px;
    width: 20px;
    height: 20px;
    border-radius: 50%;
    background-color: #c42b1c;
    font-size: 13px;
    line-height: 20px;
    text-align: center;
}
.weather-text{
    display: flex;
    flex-direction: column;
    font-size: 14.200px;
    line-height: 20px;
}
.weather-now{
    color: #c9c9c9;
}
.task-center{
    display: flex;
    align-items: center;
}
.task-search{
    display: flex;
    align-items: center;
    gap: 12px;
    width: 273px;
    height: 38px;
    margin-left: 17px;
    padding-left: 15px;
    border-radius: 19px;
    background-color: #f3f3f3;
    color: #555;
    font-size: 16px;
}
.task-icons{
    display: flex;
    margin-left: 5px;
}
.task-icon{
    position: relative;
    display: flex;
    align-items: center;
    justify-content: center;
    width: 55px;
    height: 50px;
}
.task-help svg{
    margin-left: 8px;
}
.task-active{
    border-radius: 5px;
    background-color: rgba(255,255,255,.08);
    outline: 1px solid rgba(255,255,255,.05);
}
.run-dot{
    position: absolute;
    left: 24px;
    bottom: 0;
    width: 7px;
    height: 7px;
    border-radius: 50%;
    background-color: #9b9b9b;
}
.run-pill{
    position: absolute;
    left: 17px;
    bottom: 0;
    width: 20px;
    height: 6px;
    border-radius: 3px;
    background-color: #4cc2ff;
}
.corner-badge{
    position: absolute;
    right: 4px;
    top: 5px;
    width: 22px;
    height: 22px;
    border-radius: 50%;
    background-color: #eef0f3;
    color: #334155;
    font-size: 7px;
    font-weight: 700;
    line-height: 20px;
    text-align: center;
}
.corner-photo{
    position: absolute;
    right: 4px;
    top: 5px;
    width: 20px;
    height: 24px;
    border-radius: 50%;
    background: radial-gradient(circle, #6d6252 25%, #cfc8b8 55%, #5b5346 100%);
}
.tray{
    display: flex;
    align-items: center;
    margin-left: auto;
    padding-right: 17px;
    font-size: 14px;
}
.lang{
    display: flex;
    flex-direction: column;
    align-items: center;
    width: 40px;
    margin-left: 16px;
    line-height: 21px;
}
.tray > svg:first-child{
    margin-right: 22px;
}
.tray-status{
    display: flex;
    align-items: center;
    gap: 10px;
    margin-left: 18px;
}
.clock{
    display: flex;
    flex-direction: column;
    align-items: flex-end;
    margin-left: 21px;
    font-size: 14.600px;
    line-height: 21px;
}
```
